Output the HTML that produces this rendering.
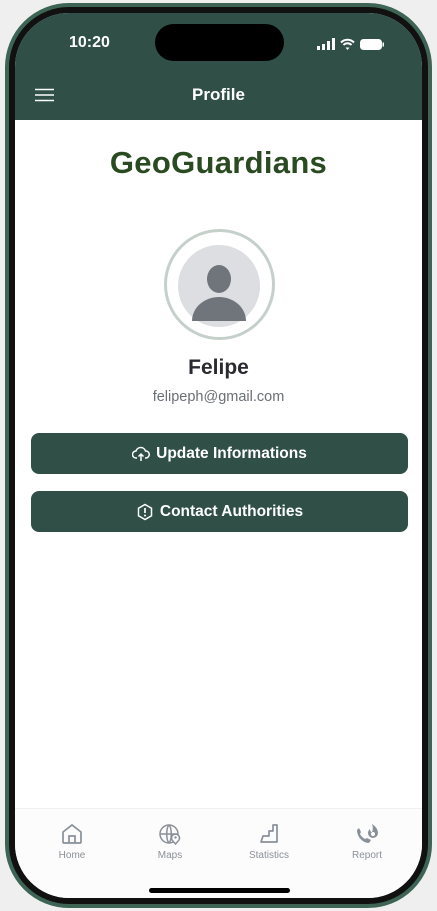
<!DOCTYPE html>
<html><head><style>
*{margin:0;padding:0;box-sizing:border-box}
body{width:437px;height:911px;background:#efefef;font-family:"Liberation Sans",sans-serif;position:relative;overflow:hidden}
.frame{position:absolute;left:5px;top:3px;width:427px;height:905px;border-radius:64px;background:#111;border:4px solid #3d6455}
.screen{position:absolute;left:15px;top:13px;width:407px;height:885px;border-radius:54px;background:#fff;overflow:hidden}
.hdr{position:absolute;left:0;top:0;width:100%;height:107px;background:#2f4f47}
.island{position:absolute;left:140px;top:11px;width:129px;height:37px;border-radius:19px;background:#000}
.time{position:absolute;left:54px;top:21px;color:#fff;font-weight:bold;font-size:16px}
.title{position:absolute;left:0;width:100%;top:72px;text-align:center;color:#fff;font-weight:bold;font-size:17px}
.brand{position:absolute;left:0;width:100%;top:132px;text-align:center;color:#2a4a22;font-weight:bold;font-size:31px;letter-spacing:0.3px}
.ring{position:absolute;left:149px;top:216px;width:111px;height:111px;border-radius:50%;border:3px solid #c6d0cb}
.name{position:absolute;left:0;width:100%;top:343px;text-align:center;color:#2a2a30;font-weight:bold;font-size:21px}
.mail{position:absolute;left:0;width:100%;top:376px;text-align:center;color:#6b6f75;font-size:14.5px}
.btn{position:absolute;left:16px;width:377px;height:41px;border-radius:8px;background:#2f4f47;color:#fff;font-weight:bold;font-size:15.5px;display:flex;align-items:center;justify-content:center;gap:6px}
.tab{position:absolute;left:0;top:795px;width:100%;height:90px;background:#fcfcfc;border-top:1px solid #f0f0f0}
.ti{position:absolute;top:13px;width:80px;text-align:center;color:#8a9099;font-size:10px}
.ti svg{display:block;margin:0 auto 4px}
.home{position:absolute;left:134px;top:875px;width:141px;height:5px;border-radius:3px;background:#000}
</style></head><body>
<div class="frame"></div>
<div class="screen">
<div class="hdr">
<div class="island"></div>
<div class="time">10:20</div>
<svg style="position:absolute;left:294px;top:25px" width="80" height="14" viewBox="-8 0 80 14">
<rect x="0" y="8" width="3" height="4" fill="#fff"/><rect x="5" y="6" width="3" height="6" fill="#fff"/><rect x="10" y="3" width="3" height="9" fill="#fff"/><rect x="15" y="0" width="3" height="12" fill="#fff"/>
<path d="M24 4.5a9 9 0 0 1 13 0M26.5 7a5.5 5.5 0 0 1 8 0" stroke="#fff" stroke-width="2" fill="none"/><path d="M28.5 9.5l2 2.5 2-2.5z" fill="#fff"/>
<rect x="43.5" y="1.5" width="21" height="10" rx="3" fill="#fff" stroke="#fff"/><rect x="65.5" y="4.5" width="1.5" height="4" fill="#fff"/>
</svg>
<svg style="position:absolute;left:20px;top:75px" width="19" height="14"><path d="M0 1.5h19M0 7h19M0 12.5h19" stroke="#fff" stroke-width="1.6"/></svg>
<div class="title">Profile</div>
</div>
<div class="brand">GeoGuardians</div>
<div class="ring"></div>
<svg style="position:absolute;left:163px;top:232px" width="82" height="82" viewBox="0 0 82 82">
<circle cx="41" cy="41" r="41" fill="#dcdee2"/>
<ellipse cx="41" cy="34" rx="12" ry="14" fill="#6f757b"/>
<path d="M14 76a27 24 0 0 1 54 0z" fill="#6f757b"/>
</svg>
<div class="name">Felipe</div>
<div class="mail">felipeph@gmail.com</div>
<div class="btn" style="top:420px"><svg width="18" height="16" viewBox="0 0 18 16"><path d="M5 12H4a3.5 3.5 0 0 1 0-7 5 5 0 0 1 9.5 0A3.5 3.5 0 0 1 14 12h-1M9 15V8M6.5 10.5 9 8l2.5 2.5" stroke="#fff" stroke-width="1.5" fill="none"/></svg>Update Informations</div>
<div class="btn" style="top:478px"><svg width="18" height="18" viewBox="0 0 18 18"><path d="M9 1.5l6.5 3.7v7.6L9 16.5l-6.5-3.7V5.2z" stroke="#fff" stroke-width="1.5" fill="none"/><path d="M9 5v5" stroke="#fff" stroke-width="1.7"/><circle cx="9" cy="12.5" r="1" fill="#fff"/></svg>Contact Authorities</div>
<div class="tab">
<div class="ti" style="left:17px"><svg width="24" height="24" viewBox="0 0 24 24"><path d="M3 10l9-7 9 7v10a1 1 0 0 1-1 1H4a1 1 0 0 1-1-1z M9 21v-7h6v7" stroke="#8a9099" stroke-width="1.7" fill="none"/></svg>Home</div>
<div class="ti" style="left:115px"><svg width="24" height="24" viewBox="0 0 24 24"><circle cx="11" cy="12" r="9" stroke="#8a9099" stroke-width="1.5" fill="none"/><path d="M2 12h18M11 3c-3 3-3 15 0 18M11 3c3 3 3 15 0 18" stroke="#8a9099" stroke-width="1.5" fill="none"/><path d="M17.5 22l-3.5-4a4 4 0 1 1 7 0z" fill="#fff" stroke="#8a9099" stroke-width="1.5"/><circle cx="17.5" cy="15.5" r="1.2" fill="#8a9099"/></svg>Maps</div>
<div class="ti" style="left:214px"><svg width="24" height="24" viewBox="0 0 24 24"><path d="M4 20h16V3h-4v6h-4v5H6z" stroke="#8a9099" stroke-width="1.7" fill="none" stroke-linejoin="round"/></svg>Statistics</div>
<div class="ti" style="left:312px"><svg width="26" height="24" viewBox="0 0 26 24"><path d="M3 8c0 7 6 13 12 13l2-3-4-2-2 1c-2-1-4-3-5-5l1-2-2-4z" fill="#8a9099"/><path d="M18 2c3 2 6 5 6 9a5 5 0 0 1-10 0c0-2 1-3 2-4 0 2 1 3 2 3 1-2 1-5 0-8z" fill="#8a9099"/><circle cx="19" cy="12" r="2" fill="#fff"/></svg>Report</div>
</div>
<div class="home"></div>
</div>
</body></html>
